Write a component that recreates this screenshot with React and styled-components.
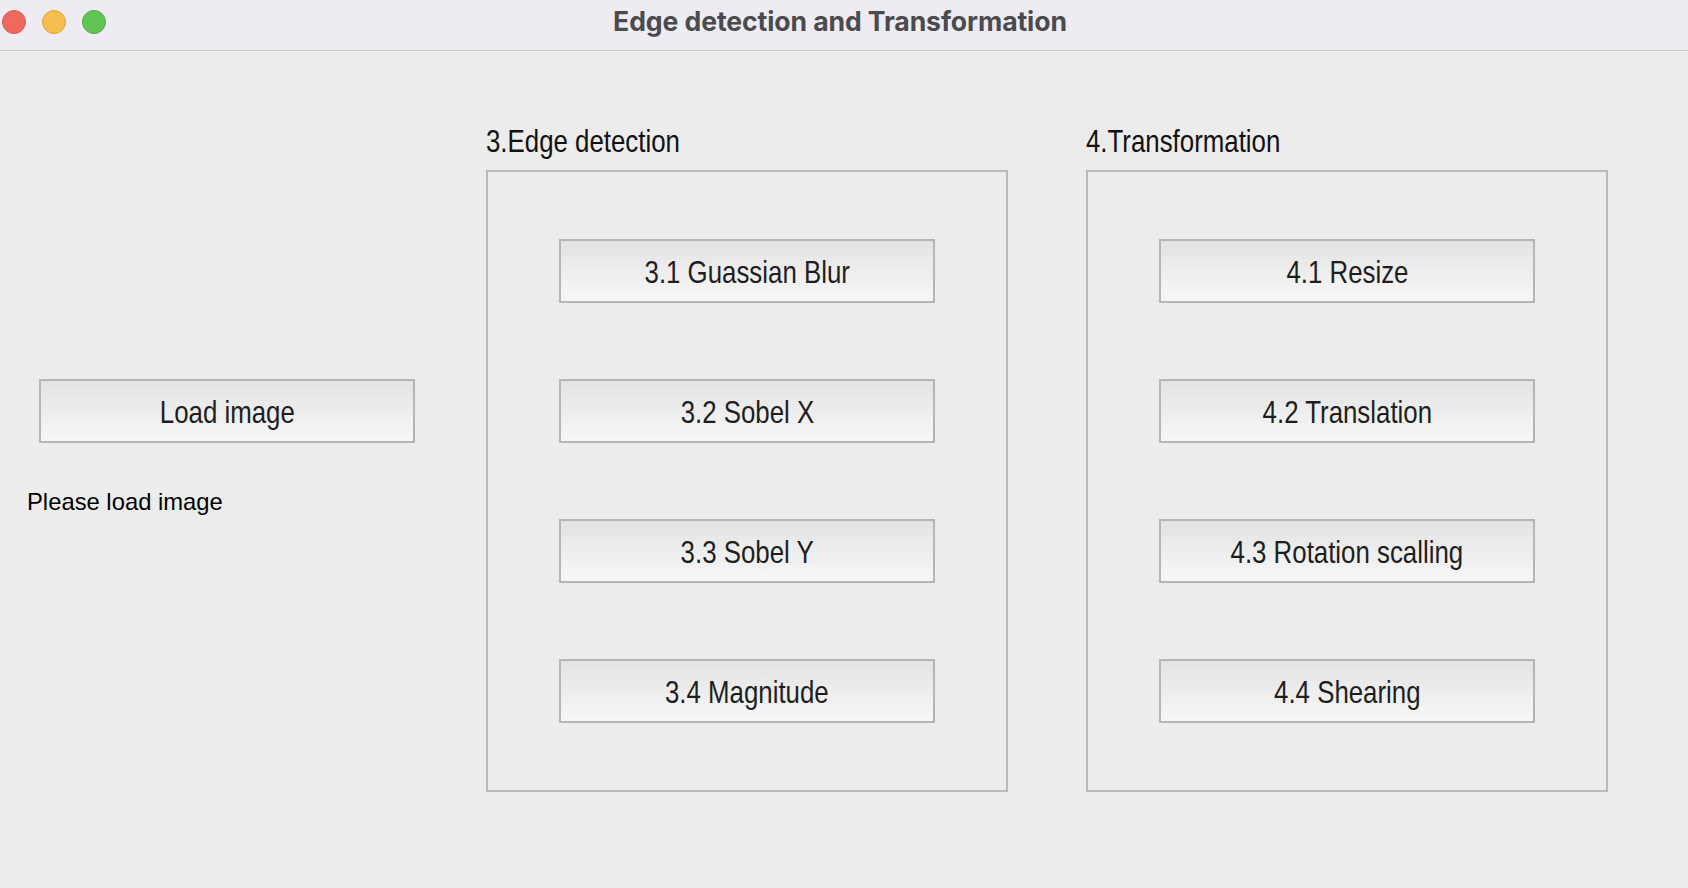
import React from 'react';
import styled, { createGlobalStyle } from 'styled-components';

const GlobalStyle = createGlobalStyle`
  html, body {
    margin: 0;
    padding: 0;
    background: #ececec;
  }
  #root {
    min-height: 100vh;
  }
`;

const Window = styled.div`
  display: flex;
  flex-direction: column;
  width: 1688px;
  height: 888px;
  background: #ececec;
  overflow: hidden;
`;

const TitleBar = styled.div`
  position: relative;
  height: 51px;
  flex: none;
  display: flex;
  align-items: center;
  justify-content: center;
  box-sizing: border-box;
  padding-bottom: 8px;
  background: #eeecf2;
  border-bottom: 1px solid #c8c8cb;
`;

const Lights = styled.div`
  position: absolute;
  left: 2px;
  top: 10px;
  display: flex;
  gap: 16px;
`;

const Light = styled.span`
  width: 22px;
  height: 22px;
  border-radius: 50%;
  background: ${(p) => p.color};
  border: 1px solid ${(p) => p.edge};
`;

const Title = styled.h1`
  margin: 0 8px 0 0;
  font-family: Inter, 'Liberation Sans', sans-serif;
  font-weight: 700;
  font-size: 26.6px;
  letter-spacing: -0.1px;
  color: #4b4a4d;
`;

const Content = styled.div`
  display: flex;
  align-items: flex-start;
  padding-top: 72px;
`;

const LeftPanel = styled.div`
  width: 486px;
  flex: none;
  display: flex;
  flex-direction: column;
  align-items: flex-start;
  padding: 256px 0 0 27px;
  box-sizing: border-box;
`;

const Groups = styled.div`
  display: flex;
  gap: 78px;
`;

const Group = styled.section`
  width: 522px;
  display: flex;
  flex-direction: column;
`;

// Qt's narrow sans: a regular sans squeezed horizontally
const Narrow = styled.span`
  display: inline-block;
  white-space: nowrap;
  transform: scaleX(0.82);
  transform-origin: ${(p) => (p.$left ? 'left center' : 'center center')};
`;

const GroupLabel = styled.div`
  font-family: 'Liberation Sans', Arial, sans-serif;
  font-size: 31.5px;
  line-height: 36px;
  color: #111;
  margin: 0 0 11px 0;
`;

const GroupBox = styled.div`
  height: 622px;
  box-sizing: border-box;
  border: 2px solid #bababa;
  padding-top: 67px;
  display: flex;
  flex-direction: column;
  align-items: center;
  gap: 76px;
`;

const Button = styled.button`
  width: 376px;
  height: 64px;
  flex: none;
  margin-left: ${(p) => p.$offset || 0}px;
  box-sizing: border-box;
  border: 2px solid #b5b5b5;
  border-radius: 0;
  background: linear-gradient(#e3e3e3, #f7f7f7);
  font-family: 'Liberation Sans', Arial, sans-serif;
  font-size: 31.5px;
  color: #1e1e1e;
  padding: 3px 0 0 0;
  cursor: pointer;
`;

const Status = styled.p`
  margin: 45px 0 0 0;
  font-family: 'Liberation Sans', Arial, sans-serif;
  font-size: 23.8px;
  line-height: 28px;
  color: #000;
`;

const groups = [
  {
    label: '3.Edge detection',
    items: ['3.1 Guassian Blur', '3.2 Sobel X', '3.3 Sobel Y', '3.4 Magnitude'],
  },
  {
    label: '4.Transformation',
    items: ['4.1 Resize', '4.2 Translation', '4.3 Rotation scalling', '4.4 Shearing'],
  },
];

export default function App() {
  return (
    <>
      <GlobalStyle />
      <Window>
        <TitleBar>
          <Lights>
            <Light color="#ee6a5f" edge="#d85a50" />
            <Light color="#f6be4f" edge="#dea63c" />
            <Light color="#61c454" edge="#4fae43" />
          </Lights>
          <Title>Edge detection and Transformation</Title>
        </TitleBar>
        <Content>
          <LeftPanel>
            <Button $offset={12}>
              <Narrow>Load image</Narrow>
            </Button>
            <Status>Please load image</Status>
          </LeftPanel>
          <Groups>
            {groups.map((g) => (
              <Group key={g.label}>
                <GroupLabel>
                  <Narrow $left>{g.label}</Narrow>
                </GroupLabel>
                <GroupBox>
                  {g.items.map((item) => (
                    <Button key={item}>
                      <Narrow>{item}</Narrow>
                    </Button>
                  ))}
                </GroupBox>
              </Group>
            ))}
          </Groups>
        </Content>
      </Window>
    </>
  );
}
